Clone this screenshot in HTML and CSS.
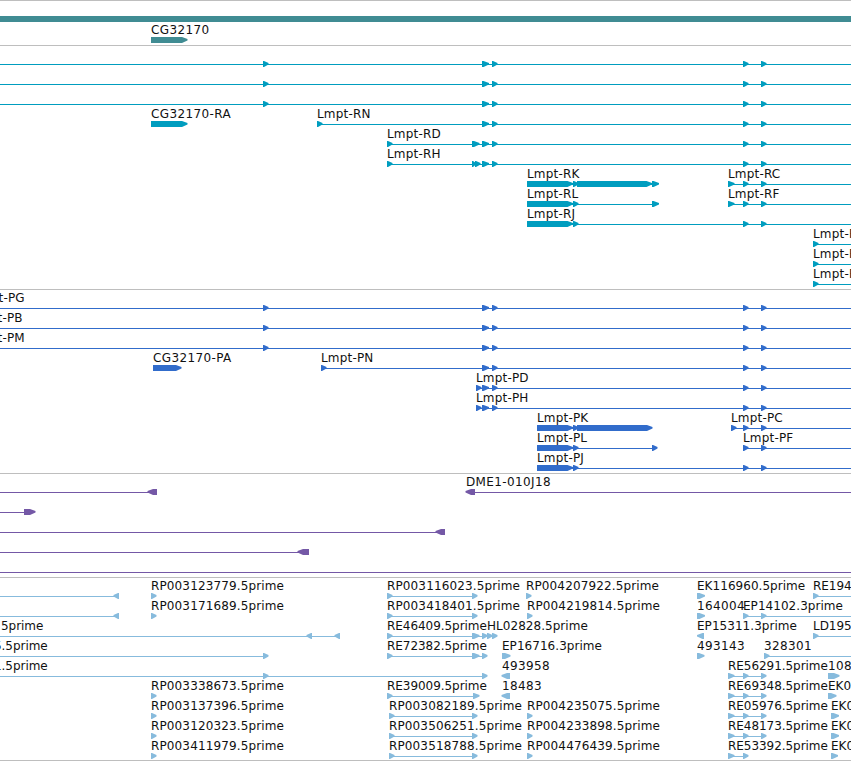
FILE: index.html
```html
<!DOCTYPE html>
<html lang="en">
<head>
  <meta charset="UTF-8" />
  <title>Genome Browser</title>
  <link rel="stylesheet" href="styles.css">
</head>
<body>

  <div class="browser">
    <div class="track gene" id="gene"></div>
    <div class="track transcript" id="transcript"></div>
    <div class="track protein" id="protein"></div>
    <div class="track bac" id="bac"></div>
    <div class="track est" id="est"></div>
  </div>

  <script src="tracks.js"></script>
</body>
</html>
```
FILE: styles.css
```css
* { margin: 0; padding: 0; box-sizing: border-box; }
body {
  font-family: "DejaVu Sans", sans-serif;
  font-size: 12px;
  background: white;
  color: black;
  overflow: hidden;
}
.browser {
  width: 851px;
  border-bottom: 1px solid #bebebe;
  overflow: hidden;
}
.track {
  border-top: 1px solid #bebebe;
  padding-bottom: 3px;
}
.gene { color: #408c93; }
.transcript { color: #009dbf; }
.protein { color: #316ccb; }
.bac { color: #7458a6; }
.est { color: #87bbdd; padding-bottom: 2px; }

.row {
  position: relative;
  height: 20px;
}
.gene .row:first-child { height: 21px; }
.glyphs {
  display: block;
  width: 851px;
  height: 20px;
  overflow: visible;
  fill: currentColor;
}
/* labels sit over the glyph canvas at their genomic position */
.label {
  position: absolute;
  top: 1px;
  line-height: 14px;
  white-space: nowrap;
  color: #111;
}
.label.lmpt { letter-spacing: 0.18px; }
.label.clone { letter-spacing: 0.13px; }
.label.wide { letter-spacing: 0.38px; }
.label.cdna { letter-spacing: -0.05px; }
.label.ep { letter-spacing: 0.04px; }
```
FILE: tracks.js
```js
// feature: [name, label x, line start, line end, exons, reverse]
const W = 851;
const shared = [[482, 489], [492, 497.5]];
const tail = [[743, 748.5], [761, 766.5]];
const full = [[263, 268.5], ...shared, ...tail];
const head = [[573, 578.5]];

function read(name, x, exons, end) {
  return [name, x, exons[0][0], end || exons[exons.length - 1][0], exons];
}
function reverseRead(name, x, exons) {
  return [name, x, exons[0][0], exons[0][0], exons, true];
}
function dot(name, x, start) {
  return read(name, x, [[start, start + 5.5]]);
}
function pair(name, x) {
  return read(name, x, [[x, x + 5.5], [472, 477.5]]);
}
function triple(name) {
  return read(name, 728, [[728, 734.5], ...tail]);
}

const tracks = {
  gene: [
    [["", 0, 0, 0, [[-10, 870]]]],
    [read("CG32170", 151, [[151, 187.5]])]
  ],
  transcript: [
    [["", 0, 0, W, full]],
    [["", 0, 0, W, full]],
    [["", 0, 0, W, full]],
    [read("CG32170-RA", 151, [[151, 187.5]]),
     read("Lmpt-RN", 317, [[317, 322.5], ...shared, ...tail], W)],
    [read("Lmpt-RD", 387, [[387, 392.5], [472, 479.5], ...shared, ...tail], W)],
    [read("Lmpt-RH", 387, [[387, 392.5], [472, 476], [475, 480.5], ...shared, ...tail], W)],
    [read("Lmpt-RK", 527, [[527, 573], ...head, [577, 652], [652, 659]]),
     read("Lmpt-RC", 728, [[728, 734.5], ...tail], W)],
    [read("Lmpt-RL", 527, [[527, 573], ...head, [652, 659]]),
     read("Lmpt-RF", 728, [[728, 734.5], ...tail], W)],
    [read("Lmpt-RJ", 527, [[527, 573], ...head, ...tail], W)],
    [read("Lmpt-RI", 813, [[813, 818.5]], W)],
    [read("Lmpt-RE", 813, [[813, 818.5]], W)],
    [read("Lmpt-RO", 813, [[813, 818.5]], W)]
  ],
  protein: [
    [["Lmpt-PG", -28, 0, W, full]],
    [["Lmpt-PB", -29, 0, W, full]],
    [["Lmpt-PM", -29, 0, W, full]],
    [read("CG32170-PA", 153, [[153, 181.5]]),
     read("Lmpt-PN", 321, [[321, 326.5], ...shared, ...tail], W)],
    [read("Lmpt-PD", 476, [[476, 481.5], ...shared, ...tail], W)],
    [read("Lmpt-PH", 476, [[476, 481.5], ...shared, ...tail], W)],
    [read("Lmpt-PK", 537, [[537, 573], ...head, [577, 652.5]]),
     read("Lmpt-PC", 731, [[731, 736.5], ...tail], W)],
    [read("Lmpt-PL", 537, [[537, 573], ...head, [652, 657.5]]),
     read("Lmpt-PF", 743, tail, W)],
    [read("Lmpt-PJ", 537, [[537, 573], ...head, ...tail], W)]
  ],
  bac: [
    [["", 0, 0, 150, [[147.5, 157]], true],
     ["DME1-010J18", 466, 470, W, [[465.5, 475]], true]],
    [["", 0, 0, 26, [[24, 35.5]]]],
    [["", 0, 0, 438, [[435.5, 445]], true]],
    [["", 0, 0, 301, [[297.5, 309]], true]],
    [["", 0, 0, W, []]]
  ],
  est: [
    [["", 0, 0, 116, [[113.5, 119]], true],
     dot("RP003123779.5prime", 151, 151),
     pair("RP003116023.5prime", 387),
     dot("RP004207922.5prime", 526, 526),
     read("EK116960.5prime", 697, [[697, 705]]),
     read("RE19403.5prime", 813, [[813, 818.5]], W)],
    [["", 0, 0, 116, [[113.5, 119]], true],
     dot("RP003171689.5prime", 151, 151),
     pair("RP003418401.5prime", 387),
     dot("RP004219814.5prime", 527, 527),
     read("164004", 697, [[697, 705]]),
     read("EP14102.3prime", 743, tail, W)],
    [["5prime", 1, 0, 338, [[306.5, 312], [334.5, 340]], true],
     read("RE46409.5prime", 387, [[387, 392.5], [472, 479.5], [482, 487.5]]),
     read("HL02828.5prime", 487, [[487, 492.5], [492, 497.5]]),
     reverseRead("EP15311.3prime", 697, [[697, 704]]),
     read("LD19557.5prime", 813, [[813, 818.5]], W)],
    [["5.5prime", -6, 0, 265, [[263, 268.5]]],
     read("RE72382.5prime", 387, [[387, 392.5], [472, 479.5], [482, 487.5]]),
     read("EP16716.3prime", 502, [[502, 510.5]]),
     read("493143", 697, [[697, 704.5]]),
     read("328301", 764, [[764, 769.5]], W)],
    [["1.5prime", -6, 0, 484, [[263, 268.5], [482, 487.5]]],
     reverseRead("493958", 502, [[501.5, 510]]),
     triple("RE56291.5prime"),
     read("108", 828, [[828, 839.5]])],
    [dot("RP003338673.5prime", 151, 151),
     read("RE39009.5prime", 387, [[387, 392.5], [473, 479.5]]),
     reverseRead("18483", 502, [[501.5, 510]]),
     triple("RE69348.5prime"),
     read("EK0", 828, [[828, 836.5]])],
    [dot("RP003137396.5prime", 151, 151),
     pair("RP003082189.5prime", 389),
     dot("RP004235075.5prime", 527, 527),
     triple("RE05976.5prime"),
     read("EK0", 831, [[831, 839]])],
    [dot("RP003120323.5prime", 151, 151),
     pair("RP003506251.5prime", 389),
     dot("RP004233898.5prime", 527, 527),
     triple("RE48173.5prime"),
     read("EK0", 831, [[831, 839]])],
    [dot("RP003411979.5prime", 151, 151),
     pair("RP003518788.5prime", 389),
     dot("RP004476439.5prime", 527, 527),
     read("RE53392.5prime", 728, [[728, 734.5], [743, 748.5]]),
     read("EK0", 831, [[831, 838]])]
  ]
};

// block with a slightly blunt pointed end, 6px high
function exonPoints(a, b, reverse) {
  const tip = Math.min(5.5, b - a - 1);
  if (reverse) {
    return `${b},15 ${a + tip},15 ${a},17 ${a},18.5 ${a + tip},21 ${b},21`;
  }
  return `${a},15 ${b - tip},15 ${b},17 ${b},18.5 ${b - tip},21 ${a},21`;
}

function labelClass(name) {
  if (name.startsWith("Lmpt")) return "lmpt";
  if (name.startsWith("RP")) return "clone";
  if (/^(EP|EK|HL)/.test(name)) return "ep";
  return name.includes("prime") ? "cdna" : "wide";
}

Object.keys(tracks).forEach(id => {
  const track = document.getElementById(id);
  tracks[id].forEach(features => {
    const row = document.createElement("div");
    row.className = "row";
    let shapes = "";
    features.forEach(([name, x, start, end, exons, reverse]) => {
      if (end > start) {
        shapes += `<rect x="${start}" y="18" width="${end - start}" height="1"/>`;
      }
      exons.forEach(([a, b]) => {
        shapes += `<polygon points="${exonPoints(a, b, reverse)}"/>`;
      });
    });
    row.innerHTML = `<svg class="glyphs">${shapes}</svg>`;
    features.forEach(([name, x]) => {
      if (!name) return;
      const label = document.createElement("span");
      label.className = "label " + labelClass(name);
      label.style.left = x + "px";
      label.textContent = name;
      row.appendChild(label);
    });
    track.appendChild(row);
  });
});
```
